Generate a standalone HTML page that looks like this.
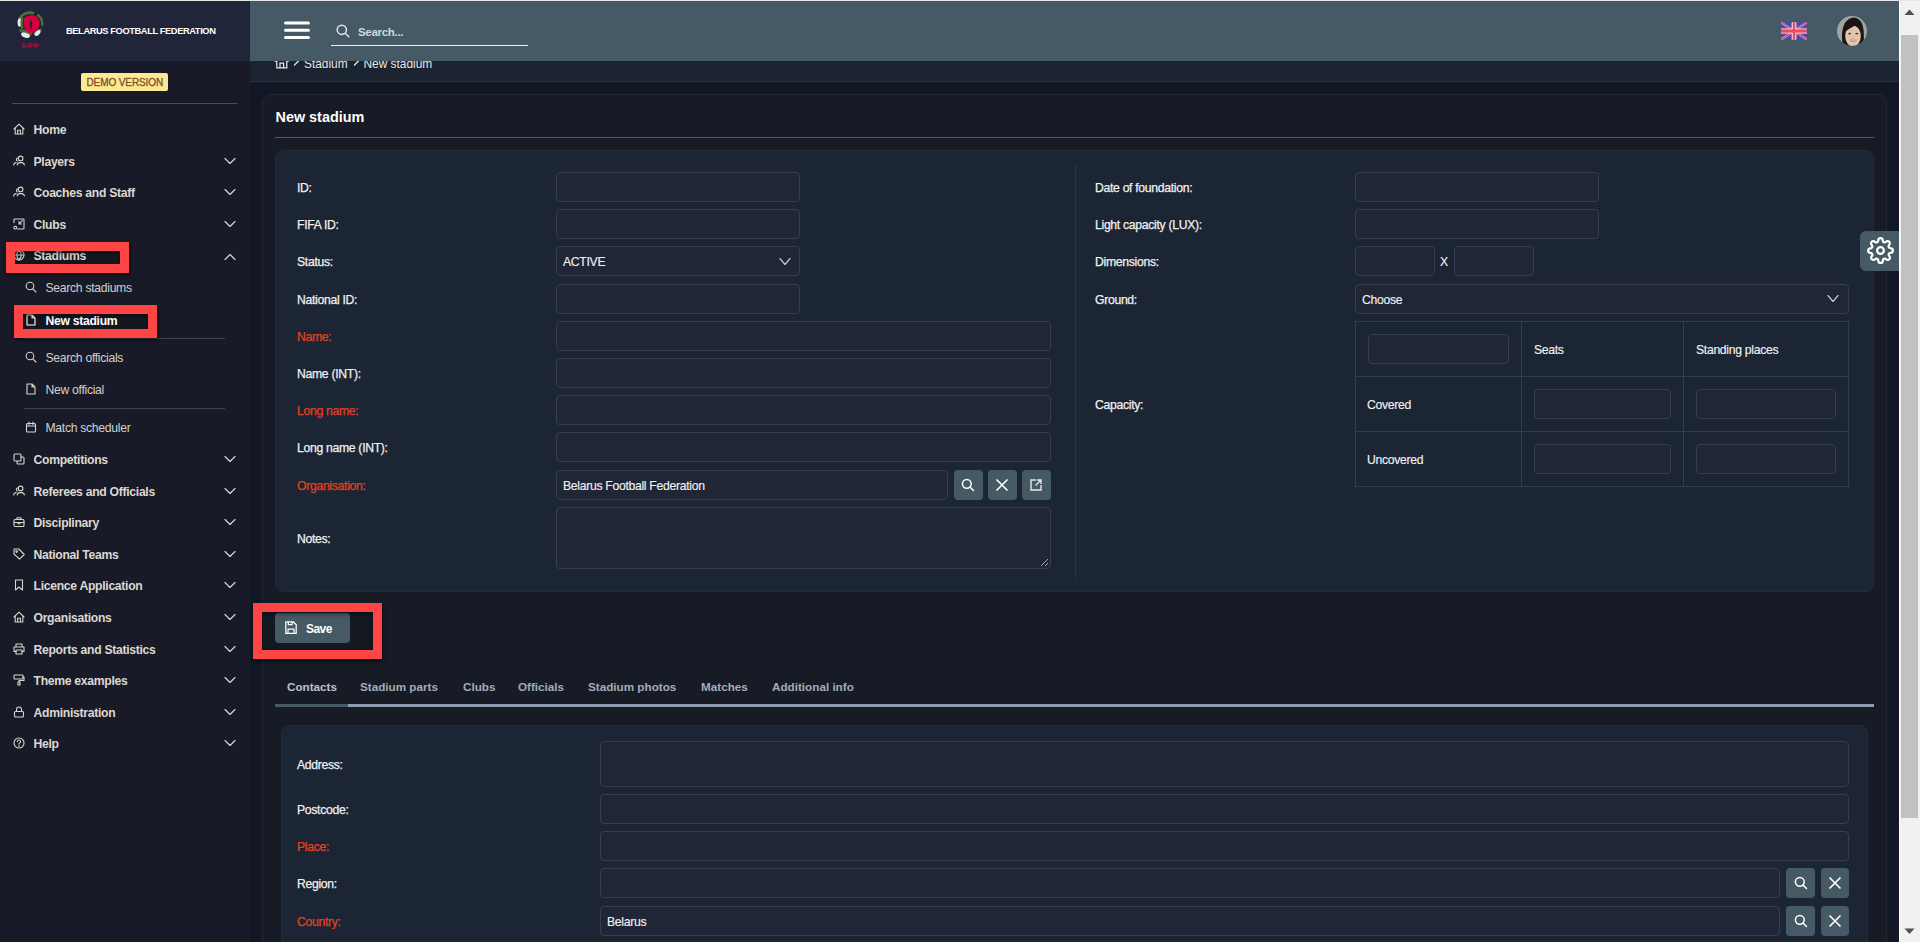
<!DOCTYPE html><html><head><meta charset="utf-8"><style>
*{box-sizing:border-box;margin:0;padding:0}
html,body{width:1920px;height:942px;overflow:hidden;background:#111725;font-family:"Liberation Sans", sans-serif;}
.a{position:absolute}
.t{position:absolute;white-space:nowrap;line-height:1}
.mi{position:absolute;left:33.5px;margin-top:1.3px;font-size:12.2px;letter-spacing:-0.3px;font-weight:bold;color:#dcd8d0;white-space:nowrap;line-height:14px}
.si{position:absolute;left:45.5px;margin-top:1.3px;font-size:12.2px;letter-spacing:-0.3px;color:#d0d0d0;white-space:nowrap;line-height:14px}
.lbl{position:absolute;margin-top:0.8px;-webkit-text-stroke:0.25px currentColor;font-size:12.2px;letter-spacing:-0.3px;color:#f0f0f0;white-space:nowrap;line-height:14px}
.req{color:#e5411f}
.inp{position:absolute;background:#202636;border:1px solid #383e4c;border-radius:4px}
.ibtn{position:absolute;background:#455a64;border-radius:4px}
.val{position:absolute;margin-top:0.8px;-webkit-text-stroke:0.15px currentColor;font-size:12.2px;letter-spacing:-0.3px;color:#f0f0f0;white-space:nowrap;line-height:14px}
</style></head><body>

<div class="a" style="left:0;top:0;width:1920px;height:1px;background:#e6e6e6"></div>
<div class="a" style="left:0;top:1px;width:250px;height:941px;background:#181b27"></div>
<div class="a" style="left:0;top:1px;width:250px;height:60px;background:#21253a"></div>
<div class="a" style="left:15px;top:251px;width:105px;height:13px;background:#141720"></div>
<div class="a" style="left:23px;top:314px;width:125px;height:15px;background:#141720"></div>
<svg class="a" style="left:15px;top:10px" width="30" height="40" viewBox="0 0 30 40">
<path d="M4.5 8.5 A12.2 12.2 0 0 1 19 3.3" stroke="#4a7436" stroke-width="2.6" fill="none"/>
<path d="M22.5 4.5 A12.2 12.2 0 0 1 27.2 16" stroke="#4a7436" stroke-width="2.2" fill="none"/>
<ellipse cx="4.6" cy="12.5" rx="2" ry="4.2" fill="#e9ecea"/>
<path d="M7.2 7 Q5.8 13 7.3 18.5" stroke="#4a7436" stroke-width="2.4" fill="none"/>
<path d="M4.5 20.5 Q10 20 16.5 24.5" stroke="#4a7436" stroke-width="2.6" fill="none"/>
<ellipse cx="10.5" cy="25.2" rx="4.6" ry="2.4" transform="rotate(18 10.5 25.2)" fill="#e9ecea"/>
<path d="M19 24.5 Q21.5 21 26.5 19.5" stroke="#4a7436" stroke-width="2.4" fill="none"/>
<ellipse cx="22.6" cy="23" rx="2" ry="3.6" transform="rotate(45 22.6 23)" fill="#e9ecea"/>
<path d="M9 8 Q13 4.5 19 5.5 Q25 7 24.5 14 Q24 21 17 23 Q12 23.5 10 19 Q8 14 9 8 Z" fill="#d6003c"/>
<path d="M15.6 9 L17.2 13.5 L16.4 20 L14.6 15.5 L15 12 Z" fill="#21253a"/>
<text x="15" y="38" font-family="Liberation Sans" font-size="7" font-weight="bold" fill="#c0003a" text-anchor="middle">БФФ</text>
</svg>
<div class="t" style="left:66px;top:26.5px;font-size:9.3px;font-weight:bold;color:#fff;letter-spacing:-0.4px">BELARUS FOOTBALL FEDERATION</div>
<div class="a" style="left:81px;top:73px;width:87px;height:18px;background:#fde992;border-radius:2px"></div>
<div class="t" style="left:86.5px;top:77.5px;font-size:10px;color:#7a532c;letter-spacing:-0.1px;-webkit-text-stroke:0.3px #7a532c">DEMO VERSION</div>
<div class="a" style="left:12px;top:103px;width:225px;height:1px;background:#4a4e58"></div>
<svg style="position:absolute;left:13px;top:123px" width="12" height="12" viewBox="0 0 12 12" fill="none" stroke="#d8d4cc" stroke-width="1.1" stroke-linecap="round" stroke-linejoin="round"><path d="M1 6 L6 1.2 L11 6 M2.2 4.9 V11 H9.8 V4.9 M4.6 11 V7.3 H7.4 V11"/></svg>
<div class="mi" style="top:122px">Home</div>
<svg style="position:absolute;left:13px;top:155px" width="12" height="12" viewBox="0 0 12 12" fill="none" stroke="#d8d4cc" stroke-width="1.1" stroke-linecap="round" stroke-linejoin="round"><circle cx="7.6" cy="3.4" r="2.3"/><path d="M4.2 10 Q4.5 7.6 6.6 7.6 H8.6 Q10.9 7.6 11.4 10"/><path d="M4.3 2.9 A1.7 1.7 0 0 0 4.2 5.9 M0.6 10 Q0.8 7.8 3.1 7.6"/></svg>
<div class="mi" style="top:154px">Players</div>
<svg style="position:absolute;left:224px;top:158px" width="12" height="6" viewBox="0 0 12 6" fill="none" stroke="#d8d4cc" stroke-width="1.2" stroke-linecap="round" stroke-linejoin="round"><path d="M1 0.5 L6.0 5.5 L11 0.5"/></svg>
<svg style="position:absolute;left:13px;top:186px" width="12" height="12" viewBox="0 0 12 12" fill="none" stroke="#d8d4cc" stroke-width="1.1" stroke-linecap="round" stroke-linejoin="round"><circle cx="7.6" cy="3.4" r="2.3"/><path d="M4.2 10 Q4.5 7.6 6.6 7.6 H8.6 Q10.9 7.6 11.4 10"/><path d="M4.3 2.9 A1.7 1.7 0 0 0 4.2 5.9 M0.6 10 Q0.8 7.8 3.1 7.6"/></svg>
<div class="mi" style="top:185px">Coaches and Staff</div>
<svg style="position:absolute;left:224px;top:189px" width="12" height="6" viewBox="0 0 12 6" fill="none" stroke="#d8d4cc" stroke-width="1.2" stroke-linecap="round" stroke-linejoin="round"><path d="M1 0.5 L6.0 5.5 L11 0.5"/></svg>
<svg style="position:absolute;left:13px;top:218px" width="12" height="12" viewBox="0 0 12 12" fill="none" stroke="#d8d4cc" stroke-width="1.1" stroke-linecap="round" stroke-linejoin="round"><path d="M1 4.5 V1.8 Q1 1 1.8 1 H10.2 Q11 1 11 1.8 V10.2 Q11 11 10.2 11 H4.6"/><circle cx="2.3" cy="9.6" r="1.4"/><path d="M9.3 2.7 L6.2 5.8 M6 3.6 V6 H8.4"/></svg>
<div class="mi" style="top:217px">Clubs</div>
<svg style="position:absolute;left:224px;top:221px" width="12" height="6" viewBox="0 0 12 6" fill="none" stroke="#d8d4cc" stroke-width="1.2" stroke-linecap="round" stroke-linejoin="round"><path d="M1 0.5 L6.0 5.5 L11 0.5"/></svg>
<svg style="position:absolute;left:13px;top:249px" width="12" height="12" viewBox="0 0 12 12" fill="none" stroke="#d8d4cc" stroke-width="1.1" stroke-linecap="round" stroke-linejoin="round"><circle cx="6" cy="6" r="5"/><path d="M1 6 H11 M6 1 C3 4 3 8 6 11 C9 8 9 4 6 1"/></svg>
<div class="mi" style="top:248px">Stadiums</div>
<svg style="position:absolute;left:224px;top:254px" width="12" height="6" viewBox="0 0 12 6" fill="none" stroke="#d8d4cc" stroke-width="1.2" stroke-linecap="round" stroke-linejoin="round"><path d="M1 5.5 L6.0 0.5 L11 5.5"/></svg>
<svg style="position:absolute;left:25px;top:281px" width="12" height="12" viewBox="0 0 12 12" fill="none" stroke="#d8d4cc" stroke-width="1.1" stroke-linecap="round" stroke-linejoin="round"><circle cx="5" cy="5" r="3.8"/><path d="M7.8 7.8 L11 11"/></svg>
<div class="si" style="top:280px">Search stadiums</div>
<svg style="position:absolute;left:25px;top:314px" width="12" height="12" viewBox="0 0 12 12" fill="none" stroke="#ffffff" stroke-width="1.1" stroke-linecap="round" stroke-linejoin="round"><path d="M2 1 H7 L10 4 V11 H2 Z M7 1 V4 H10"/></svg>
<div class="si" style="top:313px;color:#fff;font-weight:bold">New stadium</div>
<svg style="position:absolute;left:25px;top:351px" width="12" height="12" viewBox="0 0 12 12" fill="none" stroke="#d8d4cc" stroke-width="1.1" stroke-linecap="round" stroke-linejoin="round"><circle cx="5" cy="5" r="3.8"/><path d="M7.8 7.8 L11 11"/></svg>
<div class="si" style="top:350px">Search officials</div>
<svg style="position:absolute;left:25px;top:383px" width="12" height="12" viewBox="0 0 12 12" fill="none" stroke="#d8d4cc" stroke-width="1.1" stroke-linecap="round" stroke-linejoin="round"><path d="M2 1 H7 L10 4 V11 H2 Z M7 1 V4 H10"/></svg>
<div class="si" style="top:382px">New official</div>
<svg style="position:absolute;left:25px;top:421px" width="12" height="12" viewBox="0 0 12 12" fill="none" stroke="#d8d4cc" stroke-width="1.1" stroke-linecap="round" stroke-linejoin="round"><rect x="1.5" y="2.5" width="9" height="8.5" rx="1"/><path d="M1.5 5 H10.5 M4 1 V3.5 M8 1 V3.5"/></svg>
<div class="si" style="top:420px">Match scheduler</div>
<div class="a" style="left:24px;top:338px;width:201px;height:1px;background:#3f434e"></div>
<div class="a" style="left:24px;top:408px;width:201px;height:1px;background:#3f434e"></div>
<svg style="position:absolute;left:13px;top:453px" width="12" height="12" viewBox="0 0 12 12" fill="none" stroke="#d8d4cc" stroke-width="1.1" stroke-linecap="round" stroke-linejoin="round"><rect x="1" y="1" width="7" height="7" rx="1"/><path d="M4 8 V10 Q4 11 5 11 H10 Q11 11 11 10 V5 Q11 4 10 4 H8"/></svg>
<div class="mi" style="top:452px">Competitions</div>
<svg style="position:absolute;left:224px;top:456px" width="12" height="6" viewBox="0 0 12 6" fill="none" stroke="#d8d4cc" stroke-width="1.2" stroke-linecap="round" stroke-linejoin="round"><path d="M1 0.5 L6.0 5.5 L11 0.5"/></svg>
<svg style="position:absolute;left:13px;top:485px" width="12" height="12" viewBox="0 0 12 12" fill="none" stroke="#d8d4cc" stroke-width="1.1" stroke-linecap="round" stroke-linejoin="round"><circle cx="7.6" cy="3.4" r="2.3"/><path d="M4.2 10 Q4.5 7.6 6.6 7.6 H8.6 Q10.9 7.6 11.4 10"/><path d="M4.3 2.9 A1.7 1.7 0 0 0 4.2 5.9 M0.6 10 Q0.8 7.8 3.1 7.6"/></svg>
<div class="mi" style="top:484px">Referees and Officials</div>
<svg style="position:absolute;left:224px;top:488px" width="12" height="6" viewBox="0 0 12 6" fill="none" stroke="#d8d4cc" stroke-width="1.2" stroke-linecap="round" stroke-linejoin="round"><path d="M1 0.5 L6.0 5.5 L11 0.5"/></svg>
<svg style="position:absolute;left:13px;top:516px" width="12" height="12" viewBox="0 0 12 12" fill="none" stroke="#d8d4cc" stroke-width="1.1" stroke-linecap="round" stroke-linejoin="round"><rect x="1" y="3.5" width="10" height="7" rx="1"/><path d="M4 3.5 V1.8 H8 V3.5 M1 6.5 H11 M5 6.5 V7.8 H7 V6.5"/></svg>
<div class="mi" style="top:515px">Disciplinary</div>
<svg style="position:absolute;left:224px;top:519px" width="12" height="6" viewBox="0 0 12 6" fill="none" stroke="#d8d4cc" stroke-width="1.2" stroke-linecap="round" stroke-linejoin="round"><path d="M1 0.5 L6.0 5.5 L11 0.5"/></svg>
<svg style="position:absolute;left:13px;top:548px" width="12" height="12" viewBox="0 0 12 12" fill="none" stroke="#d8d4cc" stroke-width="1.1" stroke-linecap="round" stroke-linejoin="round"><path d="M1 1.5 V6 L6.5 11.2 L11.2 6.5 L5.8 1 H1.5 Z"/><circle cx="3.6" cy="3.6" r="0.8"/></svg>
<div class="mi" style="top:547px">National Teams</div>
<svg style="position:absolute;left:224px;top:551px" width="12" height="6" viewBox="0 0 12 6" fill="none" stroke="#d8d4cc" stroke-width="1.2" stroke-linecap="round" stroke-linejoin="round"><path d="M1 0.5 L6.0 5.5 L11 0.5"/></svg>
<svg style="position:absolute;left:13px;top:579px" width="12" height="12" viewBox="0 0 12 12" fill="none" stroke="#d8d4cc" stroke-width="1.1" stroke-linecap="round" stroke-linejoin="round"><path d="M2.5 1 H9.5 V11 L6 8 L2.5 11 Z"/></svg>
<div class="mi" style="top:578px">Licence Application</div>
<svg style="position:absolute;left:224px;top:582px" width="12" height="6" viewBox="0 0 12 6" fill="none" stroke="#d8d4cc" stroke-width="1.2" stroke-linecap="round" stroke-linejoin="round"><path d="M1 0.5 L6.0 5.5 L11 0.5"/></svg>
<svg style="position:absolute;left:13px;top:611px" width="12" height="12" viewBox="0 0 12 12" fill="none" stroke="#d8d4cc" stroke-width="1.1" stroke-linecap="round" stroke-linejoin="round"><path d="M1 6 L6 1.2 L11 6 M2.2 4.9 V11 H9.8 V4.9 M4.6 11 V7.3 H7.4 V11"/></svg>
<div class="mi" style="top:610px">Organisations</div>
<svg style="position:absolute;left:224px;top:614px" width="12" height="6" viewBox="0 0 12 6" fill="none" stroke="#d8d4cc" stroke-width="1.2" stroke-linecap="round" stroke-linejoin="round"><path d="M1 0.5 L6.0 5.5 L11 0.5"/></svg>
<svg style="position:absolute;left:13px;top:643px" width="12" height="12" viewBox="0 0 12 12" fill="none" stroke="#d8d4cc" stroke-width="1.1" stroke-linecap="round" stroke-linejoin="round"><path d="M3 4 V1 H9 V4 M3 8.5 H1 V4 H11 V8.5 H9"/><rect x="3" y="7" width="6" height="4"/></svg>
<div class="mi" style="top:642px">Reports and Statistics</div>
<svg style="position:absolute;left:224px;top:646px" width="12" height="6" viewBox="0 0 12 6" fill="none" stroke="#d8d4cc" stroke-width="1.2" stroke-linecap="round" stroke-linejoin="round"><path d="M1 0.5 L6.0 5.5 L11 0.5"/></svg>
<svg style="position:absolute;left:13px;top:674px" width="12" height="12" viewBox="0 0 12 12" fill="none" stroke="#d8d4cc" stroke-width="1.1" stroke-linecap="round" stroke-linejoin="round"><rect x="1" y="1" width="9" height="4" rx="0.8"/><path d="M10 3 H11 V6.5 H6 V8 M5 8 H7 V11 H5 Z"/></svg>
<div class="mi" style="top:673px">Theme examples</div>
<svg style="position:absolute;left:224px;top:677px" width="12" height="6" viewBox="0 0 12 6" fill="none" stroke="#d8d4cc" stroke-width="1.2" stroke-linecap="round" stroke-linejoin="round"><path d="M1 0.5 L6.0 5.5 L11 0.5"/></svg>
<svg style="position:absolute;left:13px;top:706px" width="12" height="12" viewBox="0 0 12 12" fill="none" stroke="#d8d4cc" stroke-width="1.1" stroke-linecap="round" stroke-linejoin="round"><rect x="1.5" y="5.5" width="9" height="5.5" rx="1"/><path d="M3.5 5.5 V3.5 a2.5 2.5 0 0 1 5 0 V5.5"/></svg>
<div class="mi" style="top:705px">Administration</div>
<svg style="position:absolute;left:224px;top:709px" width="12" height="6" viewBox="0 0 12 6" fill="none" stroke="#d8d4cc" stroke-width="1.2" stroke-linecap="round" stroke-linejoin="round"><path d="M1 0.5 L6.0 5.5 L11 0.5"/></svg>
<svg style="position:absolute;left:13px;top:737px" width="12" height="12" viewBox="0 0 12 12" fill="none" stroke="#d8d4cc" stroke-width="1.1" stroke-linecap="round" stroke-linejoin="round"><circle cx="6" cy="6" r="5"/><path d="M4.4 4.6 a1.6 1.6 0 1 1 2.3 1.4 C6 6.3 6 6.8 6 7.3"/><circle cx="6" cy="9" r="0.3"/></svg>
<div class="mi" style="top:736px">Help</div>
<svg style="position:absolute;left:224px;top:740px" width="12" height="6" viewBox="0 0 12 6" fill="none" stroke="#d8d4cc" stroke-width="1.2" stroke-linecap="round" stroke-linejoin="round"><path d="M1 0.5 L6.0 5.5 L11 0.5"/></svg>
<div class="a" style="left:250px;top:61px;width:1649px;height:20px;background:#1b2330"></div>
<div class="a" style="left:250px;top:81px;width:1649px;height:1px;background:#283040"></div>
<div class="t" style="left:304px;top:58.7px;font-size:11.9px;color:#e8e8e8">Stadium</div>
<div class="t" style="left:363.5px;top:58.7px;font-size:11.9px;color:#e8e8e8">New stadium</div>
<svg class="a" style="left:290px;top:56px" width="80" height="12"><path d="M4.5 9 L8.5 5 M64.5 9 L68.5 5" stroke="#e8e8e8" stroke-width="1.3" stroke-linecap="round"/></svg>
<svg class="a" style="left:272px;top:56px" width="18" height="14" fill="none" stroke="#ececec" stroke-width="1.2"><path d="M2.5 5 L4.8 5.5 V11.8 H14.8 V5.5 L16.8 5 M8 11.8 V7.2 H11.6 V11.8"/></svg>
<div class="a" style="left:250px;top:1px;width:1649px;height:60px;background:#455a64"></div>
<svg class="a" style="left:284px;top:21px" width="26" height="19"><g stroke="#fff" stroke-width="3" stroke-linecap="round"><path d="M1.5 2 H24.5 M1.5 9.2 H24.5 M1.5 16.4 H24.5"/></g></svg>
<svg class="a" style="left:336px;top:24px" width="14" height="14" fill="none" stroke="#e4e4e4" stroke-width="1.5" stroke-linecap="round"><circle cx="5.8" cy="5.8" r="4.6"/><path d="M9.2 9.2 L12.8 12.8"/></svg>
<div class="t" style="left:358px;top:26.5px;font-size:11.5px;font-weight:bold;color:#d3d7d9;letter-spacing:-0.3px">Search...</div>
<div class="a" style="left:331px;top:44.5px;width:197px;height:1.5px;background:#f0f0f0"></div>
<svg class="a" style="left:1781px;top:22px" width="26" height="18" viewBox="0 0 60 40">
<rect width="60" height="40" fill="#3f51b5"/>
<rect width="60" height="40" fill="#4050b0"/>
<path d="M0 0 L60 40 M60 0 L0 40" stroke="#c8a0c0" stroke-width="5"/>
<path d="M0 0 L60 40 M60 0 L0 40" stroke="#ee4a62" stroke-width="3"/>
<path d="M30 0 V40" stroke="#f2d4dc" stroke-width="11"/><path d="M0 20 H60" stroke="#f2d4dc" stroke-width="12"/>
<path d="M30 0 V40" stroke="#ee4a62" stroke-width="5.5"/><path d="M0 20 H60" stroke="#ee4a62" stroke-width="7.5"/>
</svg>
<svg class="a" style="left:1837px;top:16px" width="30" height="30" viewBox="0 0 30 30">
<defs><clipPath id="av"><circle cx="15" cy="15" r="15"/></clipPath></defs>
<g clip-path="url(#av)">
<rect width="30" height="30" fill="#a2a4a2"/>
<path d="M6 30 C3.5 18 5 3 16.5 1.5 C27 2.5 27.5 14 26.5 30 Z" fill="#1b1614"/>
<ellipse cx="16" cy="20" rx="7.8" ry="10.5" fill="#e3c4ae"/>
<path d="M8 16 C8 7 12 4 16.5 4.2 C21 4.5 24.5 8 24.5 16 C22.5 12 20.5 10.5 18 9.8 C15.5 11 11 13 8 16 Z" fill="#1b1614"/>
<ellipse cx="12.6" cy="17.6" rx="1.5" ry="0.9" fill="#4a3a34"/>
<ellipse cx="19.8" cy="17.6" rx="1.5" ry="0.9" fill="#4a3a34"/>
<ellipse cx="16.2" cy="24.2" rx="3.4" ry="1.6" fill="#c98580"/>
<path d="M13.5 24 H19" stroke="#f0e0d8" stroke-width="0.9"/>
</g></svg>
<div class="a" style="left:262px;top:94px;width:1625px;height:900px;background:#171b25;border:1px solid #23262f;border-radius:8px"></div>
<div class="t" style="left:275.5px;top:109.5px;font-size:14.4px;font-weight:bold;color:#fff">New stadium</div>
<div class="a" style="left:275px;top:137px;width:1599px;height:1px;background:#575a62"></div>
<div class="a" style="left:275px;top:150px;width:1599px;height:442px;background:#1c2533;border:1px solid #232a38;border-radius:8px"></div>
<div class="a" style="left:1075px;top:163px;width:1px;height:415px;background:#2e3544"></div>
<div class="inp" style="left:556px;top:172px;width:244px;height:30px"></div>
<div class="lbl" style="left:297px;top:180px">ID:</div>
<div class="inp" style="left:556px;top:209px;width:244px;height:30px"></div>
<div class="lbl" style="left:297px;top:217px">FIFA ID:</div>
<div class="inp" style="left:556px;top:246px;width:244px;height:30px"></div>
<div class="lbl" style="left:297px;top:254px">Status:</div>
<div class="inp" style="left:556px;top:284px;width:244px;height:30px"></div>
<div class="lbl" style="left:297px;top:292px">National ID:</div>
<div class="inp" style="left:556px;top:321px;width:495px;height:30px"></div>
<div class="lbl req" style="left:297px;top:329px">Name:</div>
<div class="inp" style="left:556px;top:358px;width:495px;height:30px"></div>
<div class="lbl" style="left:297px;top:366px">Name (INT):</div>
<div class="inp" style="left:556px;top:395px;width:495px;height:30px"></div>
<div class="lbl req" style="left:297px;top:403px">Long name:</div>
<div class="inp" style="left:556px;top:432px;width:495px;height:30px"></div>
<div class="lbl" style="left:297px;top:440px">Long name (INT):</div>
<div class="val" style="left:563px;top:254px">ACTIVE</div>
<svg style="position:absolute;left:779px;top:258px" width="12" height="7" viewBox="0 0 12 7" fill="none" stroke="#c8c8c8" stroke-width="1.2" stroke-linecap="round" stroke-linejoin="round"><path d="M1 0.5 L6.0 6.5 L11 0.5"/></svg>
<div class="lbl req" style="left:297px;top:478px">Organisation:</div>
<div class="inp" style="left:556px;top:470px;width:392px;height:30px"></div>
<div class="val" style="left:563px;top:478px">Belarus Football Federation</div>
<div class="ibtn" style="left:954px;top:470px;width:29px;height:30px"></div>
<div class="ibtn" style="left:988px;top:470px;width:29px;height:30px"></div>
<div class="ibtn" style="left:1022px;top:470px;width:29px;height:30px"></div>
<svg class="a" style="left:961px;top:478px" width="14" height="14" fill="none" stroke="#fff" stroke-width="1.5" stroke-linecap="round"><circle cx="5.8" cy="5.8" r="4.4"/><path d="M9 9 L12.5 12.5"/></svg>
<svg class="a" style="left:995px;top:478px" width="14" height="14" fill="none" stroke="#fff" stroke-width="1.6"><path d="M1.5 1.5 L12.5 12.5 M12.5 1.5 L1.5 12.5"/></svg>
<svg class="a" style="left:1029px;top:478px" width="14" height="14" fill="none" stroke="#e8e8e8" stroke-width="1.4"><path d="M7 2 H2 V12 H12 V7 M8 2 H12 V6 M12 2 L6.5 7.5"/></svg>
<div class="lbl" style="left:297px;top:531px">Notes:</div>
<div class="inp" style="left:556px;top:507px;width:495px;height:62px"></div>
<svg class="a" style="left:1040px;top:558px" width="9" height="9" stroke="#aaa" stroke-width="1"><path d="M1 8 L8 1 M5 8 L8 5"/></svg>
<div class="lbl" style="left:1095px;top:180px">Date of foundation:</div>
<div class="inp" style="left:1355px;top:172px;width:244px;height:30px"></div>
<div class="lbl" style="left:1095px;top:217px">Light capacity (LUX):</div>
<div class="inp" style="left:1355px;top:209px;width:244px;height:30px"></div>
<div class="lbl" style="left:1095px;top:254px">Dimensions:</div>
<div class="inp" style="left:1355px;top:246px;width:80px;height:30px"></div>
<div class="val" style="left:1440px;top:254px">X</div>
<div class="inp" style="left:1454px;top:246px;width:80px;height:30px"></div>
<div class="lbl" style="left:1095px;top:292px">Ground:</div>
<div class="inp" style="left:1355px;top:284px;width:494px;height:30px"></div>
<div class="val" style="left:1362px;top:292px">Choose</div>
<svg style="position:absolute;left:1827px;top:295px" width="12" height="7" viewBox="0 0 12 7" fill="none" stroke="#c8c8c8" stroke-width="1.2" stroke-linecap="round" stroke-linejoin="round"><path d="M1 0.5 L6.0 6.5 L11 0.5"/></svg>
<div class="a" style="left:1355px;top:321px;width:494px;height:166px;border:1px solid #353c4b"></div>
<div class="a" style="left:1521px;top:321px;width:1px;height:166px;background:#353c4b"></div>
<div class="a" style="left:1683px;top:321px;width:1px;height:166px;background:#353c4b"></div>
<div class="a" style="left:1355px;top:376px;width:494px;height:1px;background:#353c4b"></div>
<div class="a" style="left:1355px;top:431px;width:494px;height:1px;background:#353c4b"></div>
<div class="inp" style="left:1368px;top:334px;width:141px;height:30px"></div>
<div class="val" style="left:1534px;top:342px">Seats</div>
<div class="val" style="left:1696px;top:342px">Standing places</div>
<div class="val" style="left:1367px;top:397px">Covered</div>
<div class="val" style="left:1367px;top:452px">Uncovered</div>
<div class="inp" style="left:1534px;top:389px;width:137px;height:30px"></div>
<div class="inp" style="left:1696px;top:389px;width:140px;height:30px"></div>
<div class="inp" style="left:1534px;top:444px;width:137px;height:30px"></div>
<div class="inp" style="left:1696px;top:444px;width:140px;height:30px"></div>
<div class="lbl" style="left:1095px;top:397px">Capacity:</div>
<div class="a" style="left:1860px;top:231px;width:45px;height:40px;background:#455a64;border-radius:6px"></div>
<svg class="a" style="left:1866.5px;top:237px" width="27" height="27" viewBox="0 0 24 24" fill="none" stroke="#fff" stroke-width="2">
<circle cx="12" cy="12" r="3"/>
<path d="M19.4 15a1.65 1.65 0 0 0 .33 1.82l.06.06a2 2 0 0 1 0 2.83 2 2 0 0 1-2.83 0l-.06-.06a1.65 1.65 0 0 0-1.82-.33 1.65 1.65 0 0 0-1 1.51V21a2 2 0 0 1-2 2 2 2 0 0 1-2-2v-.09A1.65 1.65 0 0 0 9 19.4a1.65 1.65 0 0 0-1.82.33l-.06.06a2 2 0 0 1-2.83 0 2 2 0 0 1 0-2.83l.06-.06a1.65 1.65 0 0 0 .33-1.82 1.65 1.65 0 0 0-1.51-1H3a2 2 0 0 1-2-2 2 2 0 0 1 2-2h.09A1.650 1.65 0 0 0 4.6 9a1.65 1.65 0 0 0-.33-1.82l-.06-.06a2 2 0 0 1 0-2.830 2 2 0 0 1 2.83 0l.06.06a1.65 1.65 0 0 0 1.82.33H9a1.65 1.65 0 0 0 1-1.51V3a2 2 0 0 1 2-2 2 2 0 0 1 2 2v.09a1.65 1.65 0 0 0 1 1.51 1.65 1.65 0 0 0 1.82-.33l.06-.06a2 2 0 0 1 2.83 0 2 2 0 0 1 0 2.83l-.06.06a1.65 1.65 0 0 0-.33 1.82V9a1.65 1.65 0 0 0 1.51 1H21a2 2 0 0 1 2 2 2 2 0 0 1-2 2h-.09a1.65 1.65 0 0 0-1.51 1z"/>
</svg>
<div class="a" style="left:262px;top:612px;width:111px;height:38px;background:#141820"></div>
<div class="ibtn" style="left:275px;top:613px;width:75px;height:30px"></div>
<svg class="a" style="left:285px;top:621px" width="12" height="14" fill="none" stroke="#ffffff" stroke-width="1.25" stroke-linejoin="round"><path d="M0.8 0.8 H8.3 L11.2 3.7 V12.4 H0.8 Z M3.3 0.8 V3.6 H7.2 V0.8 M3 12.4 V8 H9 V12.4"/></svg>
<div class="t" style="left:306px;top:623px;font-size:12px;letter-spacing:-0.55px;font-weight:bold;color:#fff">Save</div>
<div class="t" style="left:287px;top:681px;font-size:11.7px;font-weight:bold;color:#b9c3cb">Contacts</div>
<div class="t" style="left:360px;top:681px;font-size:11.7px;font-weight:bold;color:#a3abba">Stadium parts</div>
<div class="t" style="left:463px;top:681px;font-size:11.7px;font-weight:bold;color:#a3abba">Clubs</div>
<div class="t" style="left:518px;top:681px;font-size:11.7px;font-weight:bold;color:#a3abba">Officials</div>
<div class="t" style="left:588px;top:681px;font-size:11.7px;font-weight:bold;color:#a3abba">Stadium photos</div>
<div class="t" style="left:701px;top:681px;font-size:11.7px;font-weight:bold;color:#a3abba">Matches</div>
<div class="t" style="left:772px;top:681px;font-size:11.7px;font-weight:bold;color:#a3abba">Additional info</div>
<div class="a" style="left:275px;top:704px;width:1599px;height:3px;background:#8e9bb0"></div>
<div class="a" style="left:275px;top:704px;width:73px;height:3px;background:#455a64"></div>
<div class="a" style="left:281px;top:725px;width:1587px;height:300px;background:#1c2533;border:1px solid #232a38;border-radius:8px"></div>
<div class="lbl" style="left:297px;top:757px">Address:</div>
<div class="inp" style="left:600px;top:741px;width:1249px;height:46px"></div>
<div class="lbl" style="left:297px;top:802px">Postcode:</div>
<div class="inp" style="left:600px;top:794px;width:1249px;height:30px"></div>
<div class="lbl req" style="left:297px;top:839px">Place:</div>
<div class="inp" style="left:600px;top:831px;width:1249px;height:30px"></div>
<div class="lbl" style="left:297px;top:876px">Region:</div>
<div class="inp" style="left:600px;top:868px;width:1180px;height:30px"></div>
<div class="lbl req" style="left:297px;top:914px">Country:</div>
<div class="inp" style="left:600px;top:906px;width:1180px;height:30px"></div>
<div class="val" style="left:607px;top:914px">Belarus</div>
<div class="ibtn" style="left:1786px;top:868px;width:29px;height:30px"></div>
<div class="ibtn" style="left:1821px;top:868px;width:28px;height:30px"></div>
<svg class="a" style="left:1794px;top:876px" width="14" height="14" fill="none" stroke="#fff" stroke-width="1.5" stroke-linecap="round"><circle cx="5.8" cy="5.8" r="4.4"/><path d="M9 9 L12.5 12.5"/></svg>
<svg class="a" style="left:1828px;top:876px" width="14" height="14" fill="none" stroke="#fff" stroke-width="1.6"><path d="M1.5 1.5 L12.5 12.5 M12.5 1.5 L1.5 12.5"/></svg>
<div class="ibtn" style="left:1786px;top:906px;width:29px;height:30px"></div>
<div class="ibtn" style="left:1821px;top:906px;width:28px;height:30px"></div>
<svg class="a" style="left:1794px;top:914px" width="14" height="14" fill="none" stroke="#fff" stroke-width="1.5" stroke-linecap="round"><circle cx="5.8" cy="5.8" r="4.4"/><path d="M9 9 L12.5 12.5"/></svg>
<svg class="a" style="left:1828px;top:914px" width="14" height="14" fill="none" stroke="#fff" stroke-width="1.6"><path d="M1.5 1.5 L12.5 12.5 M12.5 1.5 L1.5 12.5"/></svg>
<div class="a" style="left:6px;top:242px;width:123px;height:31px;border:9px solid #fd4545;box-shadow:1px 2px 4px rgba(0,0,0,0.6), inset 0 2px 4px rgba(0,0,0,0.45)"></div>
<div class="a" style="left:14px;top:305px;width:143px;height:33px;border:9px solid #fd4545;box-shadow:1px 2px 4px rgba(0,0,0,0.6), inset 0 2px 4px rgba(0,0,0,0.45)"></div>
<div class="a" style="left:253px;top:603px;width:129px;height:56px;border:9px solid #fd4545;box-shadow:1px 2px 4px rgba(0,0,0,0.6), inset 0 2px 4px rgba(0,0,0,0.45)"></div>
<div class="a" style="left:1899px;top:1px;width:21px;height:941px;background:#f1f1f1;border-left:1px solid #fff"></div>
<div class="a" style="left:1901px;top:35px;width:17px;height:783px;background:#c1c1c1"></div>
<svg class="a" style="left:1904px;top:9px" width="11" height="7"><path d="M0.5 6 L5.5 0.5 L10.5 6 Z" fill="#505050"/></svg>
<svg class="a" style="left:1904px;top:928px" width="11" height="7"><path d="M0.5 0.5 L5.5 6 L10.5 0.5 Z" fill="#505050"/></svg>
</body></html>
